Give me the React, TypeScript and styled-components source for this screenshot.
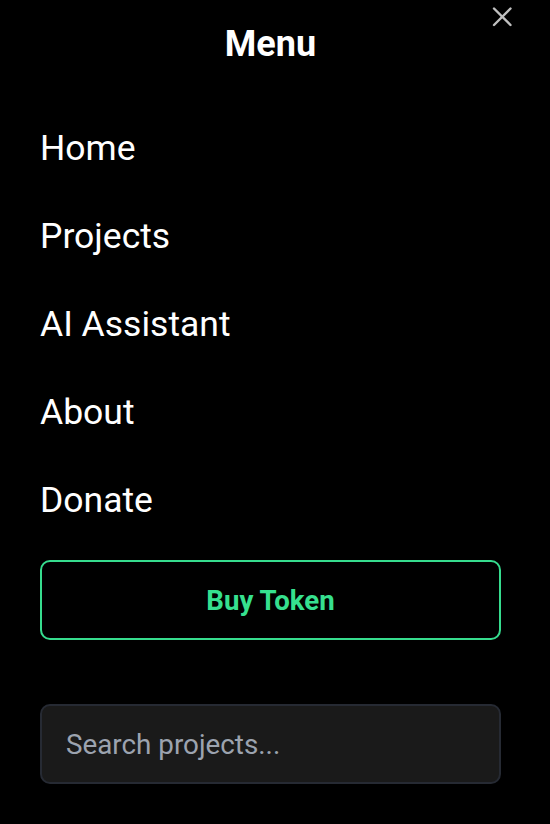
import React from 'react';
import styled, {createGlobalStyle} from 'styled-components';

const GlobalStyle = createGlobalStyle`
  html, body {
    margin: 0;
    padding: 0;
    background: #000;
  }

  body {
    font-family: Roboto, "Liberation Sans", sans-serif;
    color: #fff;
  }
`;

const Panel = styled.div`
  position: relative;
  width: 550px;
  min-height: 824px;
  box-sizing: border-box;
  padding: 20px 49px 0 40px;
  background: #000;
  display: flex;
  flex-direction: column;
`;

const Title = styled.h2`
  margin: 0;
  text-align: center;
  font-size: 36px;
  line-height: 48px;
  font-weight: 700;
`;

const CloseButton = styled.button`
  position: absolute;
  top: 7px;
  right: 38px;
  width: 20px;
  height: 20px;
  padding: 0;
  border: none;
  background: transparent;
  color: #c0c0c0;
  cursor: pointer;
  display: flex;

  svg {
    width: 20px;
    height: 20px;
  }
`;

const Nav = styled.nav`
  margin-top: 46px;
  display: flex;
  flex-direction: column;
  gap: 19px;
`;

const NavLink = styled.a`
  display: block;
  padding: 12px 0;
  font-size: 35.5px;
  line-height: 45px;
  color: #fff;
  text-decoration: none;
`;

const TokenButton = styled.button`
  margin-top: 25px;
  height: 80px;
  width: 100%;
  box-sizing: border-box;
  border: 2px solid #36dc8e;
  border-radius: 10px;
  background: transparent;
  color: #36e08f;
  font-family: Roboto, "Liberation Sans", sans-serif;
  font-size: 27.6px;
  font-weight: 700;
  cursor: pointer;
`;

const SearchInput = styled.input`
  margin-top: 64px;
  height: 80px;
  width: 100%;
  box-sizing: border-box;
  padding: 0 24px;
  border: 2px solid #262a33;
  border-radius: 10px;
  background: #1a1a1a;
  color: #fff;
  font-family: Roboto, "Liberation Sans", sans-serif;
  font-size: 27.8px;
  outline: none;

  &::placeholder {
    color: #9ca3af;
  }
`;

const links = ['Home', 'Projects', 'AI Assistant', 'About', 'Donate'];

const App = () => {
    return (
        <>
            <GlobalStyle />
            <Panel>
                <Title>Menu</Title>
                <CloseButton aria-label="Close menu">
                    <svg viewBox="0 0 20 20" fill="none" stroke="currentColor" strokeWidth="2.4" strokeLinecap="round">
                        <path d="M2 1.5 L18.5 18" />
                        <path d="M18.5 1.5 L2 18" />
                    </svg>
                </CloseButton>
                <Nav>
                    {links.map((label) => (
                        <NavLink key={label} href="#">{label}</NavLink>
                    ))}
                </Nav>
                <TokenButton>Buy Token</TokenButton>
                <SearchInput placeholder="Search projects..." />
            </Panel>
        </>
    );
};

export default App;
